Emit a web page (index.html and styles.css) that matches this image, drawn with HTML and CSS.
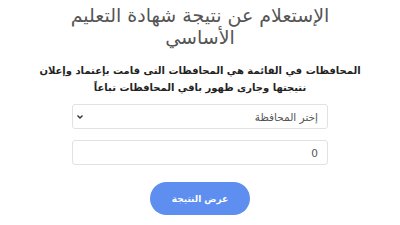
FILE: index.html
```html
<!DOCTYPE html>
<html lang="ar" dir="rtl">
<head>
<meta charset="utf-8">
<link rel="stylesheet" href="styles.css">
</head>
<body>
<main class="page">
  <h1 class="title">الإستعلام عن نتيجة شهادة التعليم<br>الأساسي</h1>
  <p class="note">المحافظات في القائمة هي المحافظات التى قامت بإعتماد وإعلان<br>نتيجتها وجارى ظهور باقي المحافظات تباعاً</p>
  <form class="form">
    <div class="field select-field">
      <span class="placeholder">إختر المحافظة</span>
      <svg class="chev" width="8" height="6" viewBox="0 0 8 6"><path d="M1.5 1.5 L4 4 L6.5 1.5" fill="none" stroke="#333" stroke-width="1.4"/></svg>
    </div>
    <div class="field">
      <span class="value">0</span>
    </div>
    <button type="button" class="btn">عرض النتيجة</button>
  </form>
</main>
</body>
</html>
```
FILE: styles.css
```css
* { box-sizing: border-box; }
html, body { margin: 0; padding: 0; background: #fff; }
body { font-family: "DejaVu Sans", "Noto Sans", sans-serif; }
.page {
  width: 400px;
  display: flex;
  flex-direction: column;
  align-items: center;
  padding-top: 4px;
}
.title {
  margin: 0;
  text-align: center;
  font-size: 19px;
  font-weight: normal;
  line-height: 22px;
  color: #555;
  white-space: nowrap;
}
.note {
  margin: 14px 0 0;
  text-align: center;
  font-size: 10px;
  font-weight: bold;
  line-height: 17px;
  color: #222;
  white-space: nowrap;
}
.form {
  display: flex;
  flex-direction: column;
  align-items: center;
  margin-top: 8px;
}
.field {
  width: 256px;
  height: 25px;
  border: 1px solid #e2e2e2;
  border-radius: 3px;
  display: flex;
  align-items: center;
  justify-content: space-between;
  padding: 0 9px 0 3px;
  font-size: 10.5px;
  color: #555;
  margin-bottom: 11px;
}
.chev { display: block; }
.btn {
  margin-top: 6px;
  width: 100px;
  height: 33px;
  border: none;
  border-radius: 17px;
  background: #5d8ef0;
  color: #fff;
  font-family: inherit;
  font-size: 9px;
  font-weight: bold;
}
```
